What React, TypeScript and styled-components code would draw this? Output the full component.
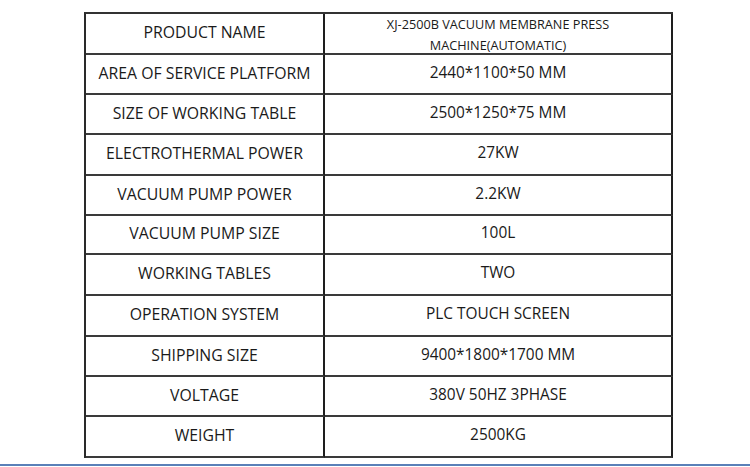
import React from "react";
import styled, { createGlobalStyle } from "styled-components";

const GlobalStyle = createGlobalStyle`
  html, body {
    margin: 0;
    padding: 0;
    background: #ffffff;
  }
  body {
    font-family: "Open Sans", "Noto Sans", "Liberation Sans", sans-serif;
    color: #222222;
  }
`;

const Page = styled.div`
  width: 750px;
  height: 467px;
  display: flex;
  flex-direction: column;
  justify-content: space-between;
  overflow: hidden;
`;

const Table = styled.div`
  margin: 12px 0 0 84px;
  width: 587px;
  display: grid;
  grid-template-columns: 239px 348px;
  border-top: 2px solid #333333;
  border-left: 2px solid #2a2a2a;
`;

const Cell = styled.div<{ $h: number; $small?: boolean; $label?: boolean }>`
  height: ${(p) => p.$h}px;
  box-sizing: border-box;
  border-bottom: 2px solid #3a3a3a;
  border-right: 2px solid #1e1e1e;
  display: flex;
  align-items: center;
  justify-content: center;
  text-align: center;
  padding-top: ${(p) => (p.$small ? 2 : 0)}px;
  padding-bottom: ${(p) => (p.$small ? 0 : 3)}px;
  font-size: ${(p) => (p.$small ? 12.7 : p.$label ? 15.8 : 15.4)}px;
  line-height: ${(p) => (p.$small ? 21 : 20)}px;
  color: #1a1a1a;
`;

const BlueRule = styled.div`
  height: 2px;
  background: #5a80b8;
  margin-bottom: 1px;
`;

type Row = { label: string; value: React.ReactNode; h: number; small?: boolean };

const rows: Row[] = [
  {
    label: "PRODUCT NAME",
    value: (
      <>
        XJ-2500B VACUUM MEMBRANE PRESS
        <br />
        MACHINE(AUTOMATIC)
      </>
    ),
    h: 41,
    small: true,
  },
  { label: "AREA OF SERVICE PLATFORM", value: "2440*1100*50 MM", h: 40 },
  { label: "SIZE OF WORKING TABLE", value: "2500*1250*75 MM", h: 40 },
  { label: "ELECTROTHERMAL POWER", value: "27KW", h: 41 },
  { label: "VACUUM PUMP POWER", value: "2.2KW", h: 40 },
  { label: "VACUUM PUMP SIZE", value: "100L", h: 39 },
  { label: "WORKING TABLES", value: "TWO", h: 41 },
  { label: "OPERATION SYSTEM", value: "PLC TOUCH SCREEN", h: 41 },
  { label: "SHIPPING SIZE", value: "9400*1800*1700 MM", h: 40 },
  { label: "VOLTAGE", value: "380V 50HZ 3PHASE", h: 40 },
  { label: "WEIGHT", value: "2500KG", h: 41 },
];

export default function App() {
  return (
    <>
      <GlobalStyle />
      <Page>
        <Table>
          {rows.map((r) => (
            <React.Fragment key={r.label}>
              <Cell $h={r.h} $label>
                {r.label}
              </Cell>
              <Cell $h={r.h} $small={r.small}>
                {r.value}
              </Cell>
            </React.Fragment>
          ))}
        </Table>
        <BlueRule />
      </Page>
    </>
  );
}
